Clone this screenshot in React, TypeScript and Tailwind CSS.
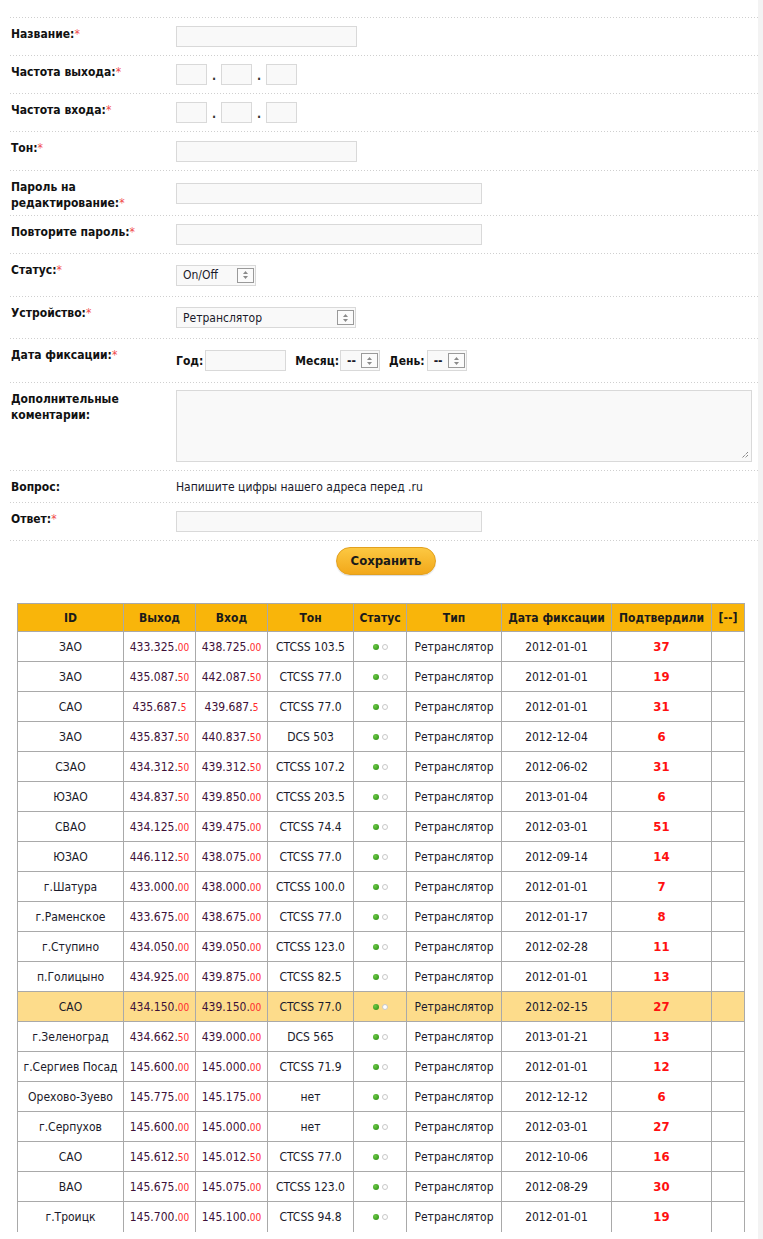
import React from "react";

const FONT = { fontFamily: '"DejaVu Sans Condensed", "DejaVu Sans", Tahoma, sans-serif' };

function Divider() {
  return (
    <div className="h-px w-full bg-[repeating-linear-gradient(to_right,#cfcfcf_0,#cfcfcf_1px,transparent_1px,transparent_3px)]" />
  );
}

function Req() {
  return <span className="font-normal text-[#f04a4a]">*</span>;
}

function Row({
  h,
  label,
  req,
  children,
  center,
}: {
  h: string;
  label: React.ReactNode;
  req?: boolean;
  children?: React.ReactNode;
  center?: boolean;
}) {
  return (
    <>
      <div className={`flex ${h} ${center ? "items-center" : ""}`}>
        <div
          className={`w-[166px] shrink-0 pl-px text-[12px] font-bold leading-4 text-[#111] ${
            center ? "" : "pt-[8px]"
          }`}
        >
          {label}
          {req && <Req />}
        </div>
        <div className="flex items-center self-center">{children}</div>
      </div>
      <Divider />
    </>
  );
}

function Input({ w }: { w: string }) {
  return <div className={`${w} h-[21px] border border-[#d9d9d9] bg-[#f9f9f9]`} />;
}

function ArrowBox() {
  return (
    <div className="flex h-[15px] w-[17px] flex-col items-center justify-center gap-[2px] border border-[#9a9a9a] bg-[#fbfbfb]">
      <svg width="5" height="3" viewBox="0 0 5 3">
        <path d="M2.5 0 L5 3 L0 3 Z" fill="#8a8a8a" />
      </svg>
      <svg width="5" height="3" viewBox="0 0 5 3">
        <path d="M0 0 L5 0 L2.5 3 Z" fill="#8a8a8a" />
      </svg>
    </div>
  );
}

function Select({ w, text }: { w: string; text: string }) {
  return (
    <div
      className={`${w} flex h-[21px] items-center justify-between border border-[#d9d9d9] bg-[#f9f9f9] pl-[6px] pr-px text-[12px] text-[#1a1a2a]`}
    >
      <span>{text}</span>
      <ArrowBox />
    </div>
  );
}

function Dot() {
  return <span className="mx-[5px] self-end pb-[3px] text-[12px] font-bold leading-none text-[#333]">.</span>;
}

type R = [string, string, string, string, string, string, string, string, number];

const rows: R[] = [
  ["ЗАО", "433.325", "00", "438.725", "00", "CTCSS 103.5", "2012-01-01", "", 37],
  ["ЗАО", "435.087", "50", "442.087", "50", "CTCSS 77.0", "2012-01-01", "", 19],
  ["САО", "435.687", "5", "439.687", "5", "CTCSS 77.0", "2012-01-01", "", 31],
  ["ЗАО", "435.837", "50", "440.837", "50", "DCS 503", "2012-12-04", "", 6],
  ["СЗАО", "434.312", "50", "439.312", "50", "CTCSS 107.2", "2012-06-02", "", 31],
  ["ЮЗАО", "434.837", "50", "439.850", "00", "CTCSS 203.5", "2013-01-04", "", 6],
  ["СВАО", "434.125", "00", "439.475", "00", "CTCSS 74.4", "2012-03-01", "", 51],
  ["ЮЗАО", "446.112", "50", "438.075", "00", "CTCSS 77.0", "2012-09-14", "", 14],
  ["г.Шатура", "433.000", "00", "438.000", "00", "CTCSS 100.0", "2012-01-01", "", 7],
  ["г.Раменское", "433.675", "00", "438.675", "00", "CTCSS 77.0", "2012-01-17", "", 8],
  ["г.Ступино", "434.050", "00", "439.050", "00", "CTCSS 123.0", "2012-02-28", "", 11],
  ["п.Голицыно", "434.925", "00", "439.875", "00", "CTCSS 82.5", "2012-01-01", "", 13],
  ["САО", "434.150", "00", "439.150", "00", "CTCSS 77.0", "2012-02-15", "hl", 27],
  ["г.Зеленоград", "434.662", "50", "439.000", "00", "DCS 565", "2013-01-21", "", 13],
  ["г.Сергиев Посад", "145.600", "00", "145.000", "00", "CTCSS 71.9", "2012-01-01", "", 12],
  ["Орехово-Зуево", "145.775", "00", "145.175", "00", "нет", "2012-12-12", "", 6],
  ["г.Серпухов", "145.600", "00", "145.000", "00", "нет", "2012-03-01", "", 27],
  ["САО", "145.612", "50", "145.012", "50", "CTCSS 77.0", "2012-10-06", "", 16],
  ["ВАО", "145.675", "00", "145.075", "00", "CTCSS 123.0", "2012-08-29", "", 30],
  ["г.Троицк", "145.700", "00", "145.100", "00", "CTCSS 94.8", "2012-01-01", "", 19],
];

function Freq({ main, frac }: { main: string; frac: string }) {
  return (
    <span className="whitespace-nowrap">
      <span className="text-[#3d1038]">{main}.</span>
      <span className="text-[10px] text-[#ff2a2a]">{frac}</span>
    </span>
  );
}

function Status() {
  return (
    <span className="inline-flex items-center gap-[3px] align-middle">
      <span className="h-[6px] w-[6px] rounded-full bg-[radial-gradient(circle_at_35%_35%,#6cc845,#268a0e)]" />
      <span className="h-[6px] w-[6px] rounded-full border border-[#c8c8c8] bg-white" />
    </span>
  );
}

const th = "border border-[#a9a9a9] text-[12px] font-bold text-[#1a1a1a] h-[28px] text-center";
const td = "border border-[#a9a9a9] text-[12px] text-[#1a1a2a] h-[30px] text-center whitespace-nowrap";

export default function App() {
  return (
    <div className="w-[763px] bg-[#f3f3f3]" style={FONT}>
      <div className="w-[758px] bg-white pb-[10px]">
        <div className="ml-[10px] w-[748px] pt-[17px]">
          <Divider />
          <Row h="h-[37px]" label="Название:" req>
            <Input w="w-[181px]" />
          </Row>
          <Row h="h-[37px]" label="Частота выхода:" req>
            <Input w="w-[31px]" />
            <Dot />
            <Input w="w-[31px]" />
            <Dot />
            <Input w="w-[31px]" />
          </Row>
          <Row h="h-[37px]" label="Частота входа:" req>
            <Input w="w-[31px]" />
            <Dot />
            <Input w="w-[31px]" />
            <Dot />
            <Input w="w-[31px]" />
          </Row>
          <Row h="h-[38px]" label="Тон:" req>
            <Input w="w-[181px]" />
          </Row>
          <Row
            h="h-[44px]"
            label={
              <>
                Пароль на
                <br />
                редактирование:
              </>
            }
            req
          >
            <Input w="w-[306px]" />
          </Row>
          <Row h="h-[37px]" label="Повторите пароль:" req>
            <Input w="w-[306px]" />
          </Row>
          <Row h="h-[42px]" label="Статус:" req>
            <Select w="w-[80px]" text="On/Off" />
          </Row>
          <Row h="h-[41px]" label="Устройство:" req>
            <Select w="w-[180px]" text="Ретранслятор" />
          </Row>
          <Row h="h-[43px]" label="Дата фиксации:" req>
            <div className="flex items-center text-[12px] font-bold text-[#111]">
              <span className="mr-[2px]">Год:</span>
              <Input w="w-[81px]" />
              <span className="ml-[9px] mr-[1px]">Месяц:</span>
              <Select w="w-[40px]" text="--" />
              <span className="ml-[9px] mr-[2px]">День:</span>
              <Select w="w-[40px]" text="--" />
            </div>
          </Row>
          <Row
            h="h-[87px]"
            label={
              <>
                Дополнительные
                <br />
                коментарии:
              </>
            }
          >
            <div className="relative -mt-[2px] h-[72px] w-[576px] border border-[#d9d9d9] bg-[#f9f9f9]">
              <svg className="absolute bottom-[2px] right-[2px]" width="8" height="8" viewBox="0 0 8 8">
                <path d="M7 1 L1 7 M7 4 L4 7" stroke="#555" strokeWidth="1" strokeDasharray="1 1" />
              </svg>
            </div>
          </Row>
          <Row h="h-[31px]" label="Вопрос:" center>
            <span className="text-[12px] font-normal text-[#1a1a2a]">Напишите цифры нашего адреса перед .ru</span>
          </Row>
          <Row h="h-[37px]" label="Ответ:" req>
            <Input w="w-[306px]" />
          </Row>
          <div className="flex justify-center pl-[4px] pt-[6px]">
            <button className="h-[28px] w-[100px] rounded-full border border-[#e2a01e] bg-[linear-gradient(#fcc842,#f2a81a)] text-[13px] font-bold text-[#1a1a1a] shadow-[0_1px_1px_rgba(0,0,0,0.15)]">
              Сохранить
            </button>
          </div>
        </div>

        <div className="ml-[17px] mt-[28px]">
          <table className="w-[727px] table-fixed border-collapse">
            <colgroup>
              <col className="w-[106px]" />
              <col className="w-[72px]" />
              <col className="w-[72px]" />
              <col className="w-[86px]" />
              <col className="w-[53px]" />
              <col className="w-[95px]" />
              <col className="w-[110px]" />
              <col className="w-[100px]" />
              <col className="w-[33px]" />
            </colgroup>
            <thead>
              <tr className="bg-[#f9b50a]">
                <th className={th}>ID</th>
                <th className={th}>Выход</th>
                <th className={th}>Вход</th>
                <th className={th}>Тон</th>
                <th className={th}>Статус</th>
                <th className={th}>Тип</th>
                <th className={th}>Дата фиксации</th>
                <th className={th}>Подтвердили</th>
                <th className={th}>[--]</th>
              </tr>
            </thead>
            <tbody>
              {rows.map((r, i) => {
                const last = i === rows.length - 1;
                const c = last ? `${td} border-b-0` : td;
                return (
                  <tr key={i} className={r[7] === "hl" ? "bg-[#fddc8b]" : "bg-white"}>
                    <td className={c}>{r[0]}</td>
                    <td className={c}>
                      <Freq main={r[1]} frac={r[2]} />
                    </td>
                    <td className={c}>
                      <Freq main={r[3]} frac={r[4]} />
                    </td>
                    <td className={c}>{r[5]}</td>
                    <td className={c}>
                      <Status />
                    </td>
                    <td className={c}>Ретранслятор</td>
                    <td className={c}>{r[6]}</td>
                    <td className={`${c} text-[13px] font-bold text-[#ff1010]`}>{r[8]}</td>
                    <td className={c}></td>
                  </tr>
                );
              })}
            </tbody>
          </table>
        </div>
      </div>
    </div>
  );
}
